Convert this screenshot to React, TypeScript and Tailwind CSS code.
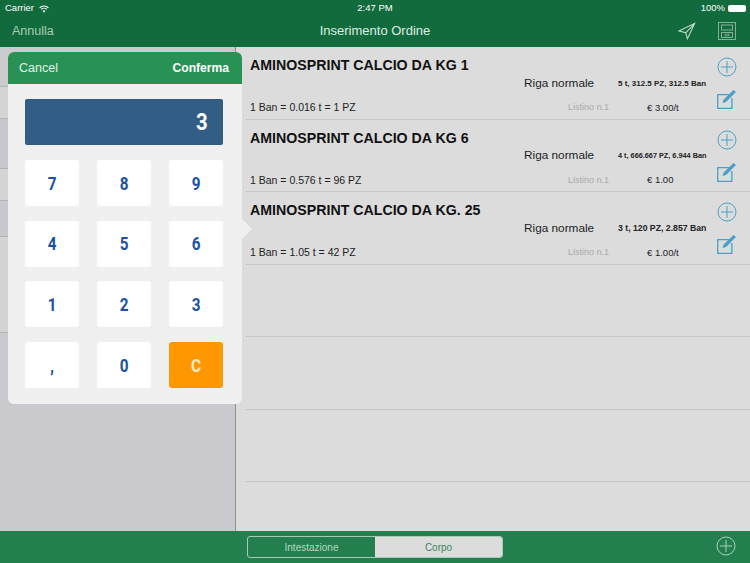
import React from 'react';

const font = "font-['Liberation_Sans',Arial,sans-serif]";

// qty text shrinks to fit its column, so the size differs per row
const rows = [
  { name: 'AMINOSPRINT CALCIO DA KG 1', qty: '5 t, 312.5 PZ, 312.5 Ban', qtySize: 'text-[8px]', conv: '1 Ban = 0.016 t = 1 PZ', price: '€ 3.00/t' },
  { name: 'AMINOSPRINT CALCIO DA KG 6', qty: '4 t, 666.667 PZ, 6.944 Ban', qtySize: 'text-[7.3px]', conv: '1 Ban = 0.576 t = 96 PZ', price: '€ 1.00' },
  { name: 'AMINOSPRINT CALCIO DA KG. 25', qty: '3 t, 120 PZ, 2.857 Ban', qtySize: 'text-[8.7px]', conv: '1 Ban = 1.05 t = 42 PZ', price: '€ 1.00/t' },
];

const keys = ['7', '8', '9', '4', '5', '6', '1', '2', '3', ',', '0', 'C'];

// left list is hidden behind the popover, only its edges show
const leftBands = [
  { h: 'h-[40px]', bg: 'bg-[#cbcbce]' },
  { h: 'h-[32px]', bg: 'bg-[#d4d4d4]' },
  { h: 'h-[50px]', bg: 'bg-[#c7c7cc]' },
  { h: 'h-[32px]', bg: 'bg-[#d4d4d4]' },
  { h: 'h-[36px]', bg: 'bg-[#c7c7cc]' },
  { h: 'h-[96px]', bg: 'bg-[#d3d3d3]' },
];

const PlusCircle = ({ color }: { color: string }) => (
  <svg width="20" height="20" viewBox="0 0 20 20" fill="none" stroke={color} strokeWidth="1">
    <circle cx="10" cy="10" r="9" />
    <path d="M10 4v12M4 10h12" />
  </svg>
);

const EditIcon = () => (
  <svg width="20" height="19" viewBox="0 0 20 19" fill="none" stroke="#4a9fc8">
    <path d="M12.5 4.7H.7v13.6h14.2V8" strokeWidth="1.3" />
    <path d="M5.5 13l1.2-3.4L16.5 0 19 2 9 12z" fill="#4a9fc8" stroke="none" />
  </svg>
);

const Row = ({ name, qty, qtySize, conv, price }: (typeof rows)[number]) => (
  <div className="h-[72.5px] shrink-0 ml-[10px] border-b border-[#c4c4c4] pl-[4px] pr-[13px] flex">
    <div className="flex-1 flex flex-col">
      <div className="text-[14.2px] font-bold text-[#111] leading-[18px] mt-[9px]">{name}</div>
      <div className="flex items-center justify-end h-[14px] mt-[2.5px]">
        <span className="text-[11.8px] text-[#222] w-[94px]">Riga normale</span>
        <span className={`${qtySize} font-bold text-[#222] w-[88px] text-right whitespace-nowrap`}>{qty}</span>
      </div>
      <div className="flex items-center mt-[10.5px] h-[14px]">
        <span className="text-[10.5px] text-[#222] flex-1">{conv}</span>
        <span className="text-[9px] text-[#aaa] w-[79px]">Listino n.1</span>
        <span className="text-[9.5px] text-[#222] w-[59px]">{price}</span>
      </div>
    </div>
    <div className="w-[20px] flex flex-col gap-[13px] pt-[10px] ml-[11px]">
      <PlusCircle color="#4a9fc8" />
      <EditIcon />
    </div>
  </div>
);

export default function App() {
  return (
    <div className={`relative w-[750px] h-[563px] overflow-hidden flex flex-col bg-[#dcdcdc] ${font}`}>
      <header className="h-[47px] bg-[#126b3c] text-white shrink-0 relative">
        <div className="h-[16px] pt-[1px] flex items-center justify-between pl-[5px] pr-[4px] text-[9.5px] font-medium">
          <div className="flex items-center gap-[5px]">
            <span>Carrier</span>
            <svg width="10" height="8" viewBox="0 0 10 8" fill="none" stroke="white" strokeWidth="1.1">
              <path d="M.6 2.8a6.2 6.2 0 0 1 8.8 0M2.2 4.4a4 4 0 0 1 5.6 0" />
              <path d="M5 7.6 3.6 6a2 2 0 0 1 2.8 0z" fill="white" stroke="none" />
            </svg>
          </div>
          <span className="absolute left-0 right-0 text-center">2:47 PM</span>
          <div className="flex items-center gap-[3px]">
            <span>100%</span>
            <div className="w-[18px] h-[7px] border border-white/80 rounded-[2px] bg-white" />
          </div>
        </div>
        <div className="h-[30px] flex items-center justify-between pl-[12px] pr-[14px] relative">
          <span className="text-[12.5px] text-[#a9cdb6]">Annulla</span>
          <span className="absolute left-0 right-0 text-center text-[13px] text-[#dfeee5]">Inserimento Ordine</span>
          <div className="flex items-center gap-[22px]">
            <svg width="18" height="18" viewBox="0 0 20 19" fill="none" stroke="#c2dbcb" strokeWidth="1.2">
              <path d="M1 9.5 18.5 1 10.5 18 8.5 11.5zM8.5 11.5 18.5 1" />
            </svg>
            <svg width="18" height="18" viewBox="0 0 18 18" fill="none" stroke="#82b296" strokeWidth="1">
              <rect x=".5" y=".5" width="17" height="17" />
              <rect x="3.5" y="3" width="11" height="5" />
              <rect x="3.5" y="10.5" width="11" height="5" />
              <path d="M7.2 11.5v3M9 11.5v3M10.8 11.5v3" />
            </svg>
          </div>
        </div>
      </header>

      <main className="flex-1 flex min-h-0">
        <div className="w-[236px] shrink-0 bg-[#c9c9ce] border-r border-[#8d8d8d] flex flex-col">
          {leftBands.map((b, i) => (
            <div key={i} className={`${b.h} ${b.bg} shrink-0 border-b border-[#b4b4b7]`} />
          ))}
        </div>
        <div className="flex-1 flex flex-col min-w-0">
          {rows.map((r) => (
            <Row key={r.name} {...r} />
          ))}
          <div className="h-[72.5px] shrink-0 border-b border-[#c4c4c4] ml-[10px]" />
          <div className="h-[72.5px] shrink-0 border-b border-[#c4c4c4] ml-[10px]" />
          <div className="h-[72.5px] shrink-0 border-b border-[#c4c4c4] ml-[10px]" />
        </div>
      </main>

      <footer className="h-[32px] shrink-0 bg-[#237f4e] flex items-center justify-center relative">
        <div className="w-[256px] h-[22px] flex rounded-[3px] border border-[#a3cdb3] overflow-hidden text-[10px]">
          <div className="flex-1 flex items-center justify-center text-[#b6d9c3]">Intestazione</div>
          <div className="flex-1 flex items-center justify-center bg-[#dcdcdc] text-[#3a8560]">Corpo</div>
        </div>
        <div className="absolute right-[14px] top-[5px]">
          <PlusCircle color="#a9d2b8" />
        </div>
      </footer>

      {/* Calculator popover */}
      <div className="absolute left-[8px] top-[52px] w-[234px] h-[352px] rounded-[6px] bg-[#f0f0f0] flex flex-col font-['Roboto',sans-serif]">
        <div className={`h-[32px] shrink-0 bg-[#289255] rounded-t-[6px] flex items-center justify-between pl-[11px] pr-[13px] text-[12.5px] text-white ${font}`}>
          <span className="text-[#e3f1e9]">Cancel</span>
          <span className="font-bold text-[12.1px]">Conferma</span>
        </div>
        <div className="pl-[17px] pr-[19px] pt-[15px]">
          <div className="h-[46px] rounded-[2px] bg-[#325d84] flex items-center justify-end pr-[14px] text-white font-bold text-[24px]">
            <span className="inline-block scale-x-[0.85]">3</span>
          </div>
          <div className="grid grid-cols-3 gap-x-[18.5px] gap-y-[14.7px] mt-[15px]">
            {keys.map((k) => (
              <div
                key={k}
                className={`h-[46px] rounded-[3px] flex items-center justify-center text-[18px] font-bold ${k === 'C' ? 'bg-[#ff9800] text-[#ffe9c6]' : 'bg-white text-[#1b52a4]'}`}
              >
                <span className="inline-block scale-x-[0.85]">{k}</span>
              </div>
            ))}
          </div>
        </div>
        <div className="absolute right-[-10px] top-[167px] w-0 h-0 border-y-[10px] border-y-transparent border-l-[10px] border-l-[#f0f0f0]" />
      </div>
    </div>
  );
}
